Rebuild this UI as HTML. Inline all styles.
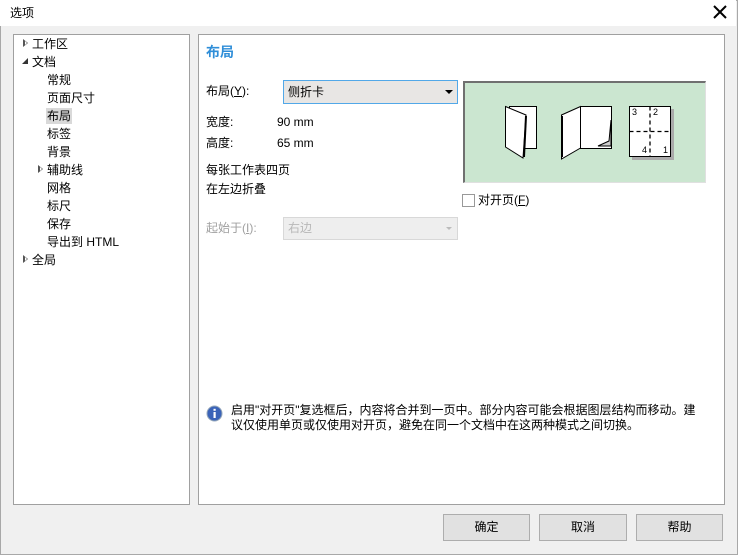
<!DOCTYPE html>
<html><head><meta charset="utf-8"><style>
*{box-sizing:border-box;margin:0;padding:0}
body{width:738px;height:555px;overflow:hidden;background:#f0f0f0;font-family:"Liberation Sans","Noto Sans CJK SC",sans-serif;font-size:12px;color:#000;position:relative}
.win{position:absolute;left:0;top:0;width:738px;height:555px;border:1px solid #a8a8a8;background:#f0f0f0}
.title{position:absolute;left:0;top:0;width:736px;height:26px;background:#fff}
.a{position:absolute;white-space:nowrap;line-height:16px}
.panel{position:absolute;background:#fff;border:1px solid #a0a0a0}
.btn{position:absolute;top:514px;height:27px;background:#e1e1e1;border:1px solid #adadad;text-align:center;line-height:25px}
.tri{position:absolute;width:0;height:0}
</style></head><body>
<div class="win"></div>
<div class="title"></div>
<div class="a" style="left:10px;top:5px">选项</div>
<svg style="position:absolute;left:713px;top:5px" width="14" height="14"><path d="M1 1L13 13M13 1L1 13" stroke="#000" stroke-width="2"/></svg>

<div class="panel" style="left:13px;top:34px;width:177px;height:471px"></div>
<div class="tri" style="left:23px;top:39px;border-left:5px solid #555;border-top:4px solid transparent;border-bottom:4px solid transparent"></div>
<div class="tri" style="left:25px;top:41px;border-left:2px solid #fff;border-top:2px solid transparent;border-bottom:2px solid transparent"></div>
<div class="a" style="left:32px;top:36px">工作区</div>
<div class="tri" style="left:22px;top:58px;border-bottom:6px solid #333;border-left:6px solid transparent"></div>
<div class="a" style="left:32px;top:54px">文档</div>
<div class="a" style="left:47px;top:72px">常规</div>
<div class="a" style="left:47px;top:90px">页面尺寸</div>
<div class="a" style="left:46px;top:108px;background:#d9d9d9;padding:0 1px">布局</div>
<div class="a" style="left:47px;top:126px">标签</div>
<div class="a" style="left:47px;top:144px">背景</div>
<div class="tri" style="left:38px;top:165px;border-left:5px solid #555;border-top:4px solid transparent;border-bottom:4px solid transparent"></div>
<div class="tri" style="left:40px;top:167px;border-left:2px solid #fff;border-top:2px solid transparent;border-bottom:2px solid transparent"></div>
<div class="a" style="left:47px;top:162px">辅助线</div>
<div class="a" style="left:47px;top:180px">网格</div>
<div class="a" style="left:47px;top:198px">标尺</div>
<div class="a" style="left:47px;top:216px">保存</div>
<div class="a" style="left:47px;top:234px">导出到 HTML</div>
<div class="tri" style="left:23px;top:255px;border-left:5px solid #555;border-top:4px solid transparent;border-bottom:4px solid transparent"></div>
<div class="tri" style="left:25px;top:257px;border-left:2px solid #fff;border-top:2px solid transparent;border-bottom:2px solid transparent"></div>
<div class="a" style="left:32px;top:252px">全局</div>

<div class="panel" style="left:198px;top:34px;width:527px;height:471px"></div>
<div class="a" style="left:206px;top:43px;font-size:14px;font-weight:bold;color:#2f8ed8;line-height:18px">布局</div>
<div class="a" style="left:206px;top:83px">布局(<u>Y</u>):</div>
<div style="position:absolute;left:283px;top:80px;width:175px;height:24px;background:#e8e6e4;border:1px solid #52a8e8"></div>
<div class="a" style="left:288px;top:84px">侧折卡</div>
<div class="tri" style="left:445px;top:90px;border-top:4px solid #000;border-left:4px solid transparent;border-right:4px solid transparent"></div>
<div class="a" style="left:206px;top:114px">宽度:</div><div class="a" style="left:277px;top:114px">90 mm</div>
<div class="a" style="left:206px;top:135px">高度:</div><div class="a" style="left:277px;top:135px">65 mm</div>
<div class="a" style="left:206px;top:162px">每张工作表四页</div>
<div class="a" style="left:206px;top:181px">在左边折叠</div>
<div class="a" style="left:206px;top:220px;color:#a0a0a0">起始于(<u>I</u>):</div>
<div style="position:absolute;left:283px;top:217px;width:175px;height:23px;background:#eee;border:1px solid #d8d8d8"></div>
<div class="a" style="left:288px;top:220px;color:#b8b8b8">右边</div>
<div class="tri" style="left:446px;top:227px;border-top:3px solid #bbb;border-left:3px solid transparent;border-right:3px solid transparent"></div>

<div style="position:absolute;left:463px;top:81px;width:243px;height:102px;background:#cbe6d0;border-top:2px solid #707070;border-left:2px solid #707070;border-right:1px solid #e0e0e0;border-bottom:1px solid #e0e0e0"></div>
<svg style="position:absolute;left:450px;top:70px" width="270" height="110" viewBox="0 0 270 110">
<g fill="#fff" stroke="#000" stroke-width="1" transform="translate(-450,-70)">
<rect x="509.5" y="106.5" width="27" height="42"/>
<path d="M505.5 106.5L526 115L523 158L505.5 147Z"/>
<path d="M526 116L524 157" stroke-width="2"/>
<rect x="580.5" y="106.5" width="31" height="42"/>
<path d="M580.5 106.5L561.5 115L561.5 159L580.5 148Z"/>
<path d="M562 116L562 157" stroke-width="2"/>
<path d="M611 120L609 141L598 146L611 146Z" fill="#ccc" stroke-width="1"/>
<rect x="632" y="109" width="42" height="51" fill="#aaa" stroke="none"/>
<rect x="629.5" y="106.5" width="41" height="50"/>
</g>
<path d="M200 36.5V87M179.5 61.5H221" stroke="#000" stroke-width="1.3" stroke-dasharray="4,3"/>
<g font-family="Liberation Sans" font-size="9"><text x="182" y="45">3</text><text x="203" y="45">2</text><text x="192" y="83">4</text><text x="213" y="83">1</text></g>
</svg>
<div style="position:absolute;left:462px;top:194px;width:13px;height:13px;border:1px solid #999;background:#fff"></div>
<div class="a" style="left:478px;top:192px">对开页(<u>F</u>)</div>

<svg style="position:absolute;left:206px;top:405px" width="17" height="17"><circle cx="8.5" cy="8.5" r="7.5" fill="#3a63b8" stroke="#9ab" stroke-width="1"/><rect x="7.5" y="7" width="2.2" height="6" fill="#fff"/><rect x="7.5" y="3.8" width="2.2" height="2" fill="#fff"/></svg>
<div class="a" style="left:231px;top:402px">启用"对开页"复选框后，内容将合并到一页中。部分内容可能会根据图层结构而移动。建</div>
<div class="a" style="left:231px;top:417px">议仅使用单页或仅使用对开页，避免在同一个文档中在这两种模式之间切换。</div>

<div class="btn" style="left:443px;width:87px">确定</div>
<div class="btn" style="left:539px;width:88px">取消</div>
<div class="btn" style="left:636px;width:87px">帮助</div>
</body></html>
